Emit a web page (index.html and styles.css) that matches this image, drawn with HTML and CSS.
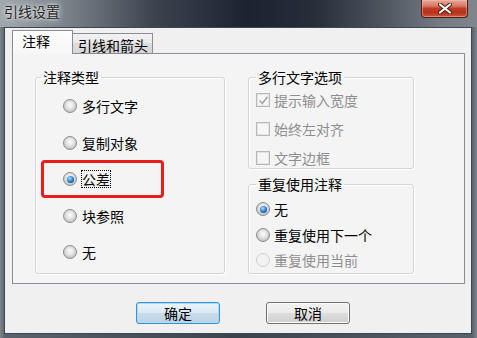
FILE: index.html
```html
<!DOCTYPE html>
<html lang="zh-CN">
<head>
<meta charset="utf-8">
<title>引线设置</title>
<link rel="stylesheet" href="styles.css">
</head>
<body>
<div class="window">
  <div class="titlebar">
    <span class="title">引线设置</span>
    <div class="close">
      <svg width="14" height="11" viewBox="0 0 14 11">
        <path d="M2 1.5 L12 9.5 M12 1.5 L2 9.5" stroke="#4a1a14" stroke-width="4" stroke-linecap="round"/>
        <path d="M2 1.5 L12 9.5 M12 1.5 L2 9.5" stroke="#ffffff" stroke-width="2.2" stroke-linecap="round"/>
      </svg>
    </div>
  </div>
  <div class="client">
    <div class="tabs">
      <div class="tab active">注释</div>
      <div class="tab">引线和箭头</div>
    </div>
    <div class="panel">
      <fieldset class="group group-type">
        <legend>注释类型</legend>
        <div class="opt"><span class="radio"></span>多行文字</div>
        <div class="opt"><span class="radio"></span>复制对象</div>
        <div class="opt mark"><span class="radio checked"></span><span class="focus">公差</span></div>
        <div class="opt"><span class="radio"></span>块参照</div>
        <div class="opt"><span class="radio"></span>无</div>
      </fieldset>
      <div class="col-right">
        <fieldset class="group group-mtext">
          <legend>多行文字选项</legend>
          <div class="row disabled"><span class="check"><svg width="11" height="11" viewBox="0 0 11 11"><path d="M1.5 5.5 L4.3 8.5 L9.5 1.8" fill="none" stroke="#a4a4a4" stroke-width="1.6"/></svg></span>提示输入宽度</div>
          <div class="row disabled"><span class="check"></span>始终左对齐</div>
          <div class="row disabled"><span class="check"></span>文字边框</div>
        </fieldset>
        <fieldset class="group group-reuse">
          <legend>重复使用注释</legend>
          <div class="row"><span class="radio checked"></span>无</div>
          <div class="row"><span class="radio"></span>重复使用下一个</div>
          <div class="row disabled"><span class="radio off"></span>重复使用当前</div>
        </fieldset>
      </div>
    </div>
    <div class="buttons">
      <button class="btn default">确定</button>
      <button class="btn">取消</button>
    </div>
  </div>
</div>
</body>
</html>
```
FILE: styles.css
```css
* { box-sizing: border-box; }
html, body {
  margin: 0;
  padding: 0;
  width: 477px;
  height: 338px;
  overflow: hidden;
}
body {
  font-family: "Noto Sans CJK SC", "Noto Sans", sans-serif;
  font-size: 14px;
  line-height: 16px;
  color: #000;
  background: #4c545e;
}
.window {
  width: 477px;
  height: 338px;
  display: flex;
  flex-direction: column;
  background: linear-gradient(to right, #7d858c 0%, #5a626b 1%, #3a424c 50%, #5a626b 99%, #7d858c 100%);
}
.titlebar {
  height: 27px;
  flex: none;
  display: flex;
  align-items: flex-start;
  background: linear-gradient(to right, #a2a8ae 0%, #7a8289 14%, #3c4450 32%, #1b2330 52%, #262e3a 66%, #4c545e 80%, #737a82 92%, #80868c 100%);
}
.title {
  margin: 3px 0 0 4px;
  color: #262626;
  font-size: 14px;
  line-height: 17px;
  text-shadow: 0 0 6px rgba(255,255,255,0.9), 0 0 3px rgba(255,255,255,0.8);
}
.close {
  margin-left: auto;
  margin-right: 9px;
  width: 47px;
  height: 18px;
  border: 1px solid #4a1f1a;
  border-top: none;
  border-radius: 0 0 4px 4px;
  background: linear-gradient(to bottom, #e9a796 0%, #d77a66 35%, #c13b22 50%, #b5321c 75%, #d0573a 100%);
  box-shadow: inset 0 0 0 1px rgba(255,200,190,0.45);
  display: flex;
  align-items: center;
  justify-content: center;
}
.close svg { display: block; margin-top: -1px; }
.client {
  margin: 0 5px 0 4px;
  height: 307px;
  flex: none;
  border: 1px solid #3e464f;
  background: #f0f0f0;
  padding: 2px 6px 9px 7px;
  display: flex;
  flex-direction: column;
}
.tabs {
  height: 23px;
  display: flex;
  align-items: flex-end;
  position: relative;
  z-index: 1;
}
.tab {
  height: 20px;
  padding: 3px 4px 0 5px;
  border: 1px solid #898c95;
  border-bottom: none;
  border-left: none;
  background: linear-gradient(to bottom, #f2f2f2 0%, #ebebeb 45%, #dddddd 50%, #d6d6d6 100%);
  white-space: nowrap;
  line-height: 17px;
}
.tab.active {
  height: 24px;
  width: 61px;
  margin-bottom: -1px;
  padding: 2px 0 0 9px;
  border-left: 1px solid #898c95;
  border-right: 1px solid #898c95;
  background: linear-gradient(to bottom, #fdfdfd 0%, #f6f6f6 100%);
  position: relative;
}
.tab.active + .tab { border-left: none; }
.panel {
  height: 231px;
  flex: none;
  border: 1px solid #898c95;
  background: #f4f4f4;
  padding: 15px 0 0 22px;
  display: flex;
  align-items: flex-start;
  gap: 23px;
}
.group {
  margin: 0;
  min-width: 0;
  border: 1px solid #d5d5d5;
  border-radius: 3px;
  box-shadow: inset 1px 1px 0 #ffffff, 1px 1px 0 #ffffff;
}
.group legend {
  padding: 0 2px;
  line-height: 16px;
  color: #000;
}
.group-type {
  width: 190px;
  padding: 3px 0 2px 5px;
}
.opt {
  height: 36.5px;
  display: flex;
  align-items: center;
  padding-left: 22px;
}
.opt.mark {
  height: 38px;
  margin: -0.75px 0;
  width: 123px;
  padding-left: 19px;
  border: 3px solid #ea1c1c;
  border-radius: 4px;
}
.focus {
  outline: 1px dotted #000;
  outline-offset: 0;
  line-height: 16px;
}
.col-right {
  display: flex;
  flex-direction: column;
}
.group-mtext {
  width: 166px;
  padding: 5px 0 0 7px;
  display: flex;
  flex-direction: column;
  gap: 9px;
}
.group-reuse {
  width: 166px;
  margin-top: 7px;
  padding: 7px 0 3px 7px;
  display: flex;
  flex-direction: column;
  gap: 5.5px;
}
.row {
  height: 20px;
  display: flex;
  align-items: center;
}
.row.disabled { color: #8e8e8e; }
.radio {
  flex: none;
  width: 14px;
  height: 14px;
  border-radius: 50%;
  border: 1px solid #8a8c8e;
  background: radial-gradient(circle at 50% 42%, #fcfcfc 0%, #e8e8e8 35%, #c2c3c4 75%, #dcdcdc 100%);
  margin-right: 5px;
  position: relative;
}
.row .radio { margin-right: 4px; }
.radio.checked::after {
  content: "";
  position: absolute;
  left: 2.5px;
  top: 2.5px;
  width: 7px;
  height: 7px;
  border-radius: 50%;
  background: radial-gradient(circle at 40% 35%, #b9e3ff 0%, #3c92dc 40%, #1a5ea8 70%, #0d3a6e 100%);
}
.radio.off {
  border-color: #d0d0d0;
  background: #f2f2f2;
}
.check {
  flex: none;
  width: 14px;
  height: 14px;
  border: 1px solid #b8b8b8;
  background: #f6f6f6;
  box-shadow: inset 0 0 0 1px #e4e4e4;
  margin-right: 4px;
  display: flex;
  align-items: center;
  justify-content: center;
}
.check svg { display: block; }
.buttons {
  margin-top: 18px;
  height: 22px;
  display: flex;
  gap: 46px;
  padding-left: 124px;
}
.btn {
  width: 84px;
  height: 22px;
  margin: 0;
  padding: 0;
  font-family: "Noto Sans CJK SC", "Noto Sans", sans-serif;
  font-size: 14px;
  line-height: 16px;
  color: #000;
  border: 1px solid #707070;
  border-radius: 3px;
  background: linear-gradient(to bottom, #f2f2f2 0%, #ebebeb 48%, #dddddd 52%, #cfcfcf 100%);
  box-shadow: inset 0 0 0 1px #fbfbfb;
}
.btn.default {
  border-color: #3c8fd0;
  background: linear-gradient(to bottom, #eaf4fb 0%, #dce9f3 48%, #c8dbe9 52%, #bdd3e4 100%);
  box-shadow: inset 0 0 0 1px #a6dcf6;
}
```
